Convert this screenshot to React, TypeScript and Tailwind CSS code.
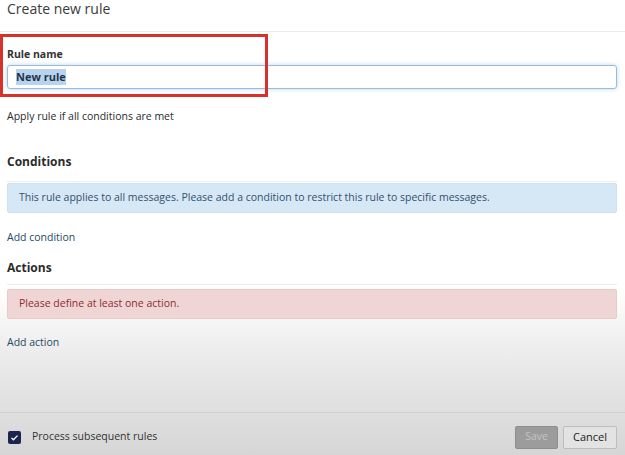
import { useState } from 'react';

const font = { fontFamily: '"Open Sans", "Noto Sans", sans-serif' };

function Section({ title, gap }: { title: string; gap: string }) {
  return (
    <div className={`border-b border-[#ececec] text-[12px] font-bold leading-[16px] text-[#2b2b2b] ${gap}`}>{title}</div>
  );
}

export default function App() {
  const [name, setName] = useState('New rule');
  const [subsequent, setSubsequent] = useState(true);

  return (
    <div
      className="relative flex h-[455px] w-[625px] flex-col bg-[linear-gradient(to_bottom,#ffffff_0%,#ffffff_64%,#eeeeee_76%,#e0e0e0_89%,#d6d6d6_100%)] text-[#2b2b2b]"
      style={font}
    >
      <div className="border-b border-[#ececec] px-[7px] pb-[13px] text-[14px] leading-[18px] text-[#3a3a3a]">
        Create new rule
      </div>

      <div className="flex flex-1 flex-col px-[7px] pr-[8px]">
        <label className="mt-[15px] text-[10.5px] font-bold leading-[15px] text-[#333]">Rule name</label>
        <div className="mt-[3px] flex h-[24px] items-center rounded-[3px] border border-[#9dbbd8] px-[8px] shadow-[0_0_4px_#b9d4ee]">
          <span className="bg-[#b9d3ee] text-[11px] font-bold text-[#1e3550]">{name}</span>
          <input className="hidden" value={name} onChange={(e) => setName(e.target.value)} />
        </div>

        <div className="mt-[20px] text-[10.5px] leading-[15px] text-[#2b2b2b]">Apply rule if all conditions are met</div>

        <div className="mt-[30px]">
          <Section title="Conditions" gap="pb-[11px]" />
        </div>
        <div className="mt-[1px] flex h-[30px] items-center rounded-[2px] border border-[#cfe1f0] bg-[#d6e8f5] px-[11px] text-[10.5px] text-[#34506e]">
          This rule applies to all messages. Please add a condition to restrict this rule to specific messages.
        </div>
        <button type="button" className="mt-[17px] self-start text-[10.5px] font-medium leading-[15px] text-[#234a5e]">
          Add condition
        </button>

        <div className="mt-[15px]">
          <Section title="Actions" gap="pb-[8px]" />
        </div>
        <div className="mt-[4px] flex h-[30px] items-center rounded-[2px] border border-[#ecc9c9] bg-[#f0d5d5] px-[11px] text-[10.5px] text-[#8e2b35]">
          Please define at least one action.
        </div>
        <button type="button" className="mt-[16px] self-start text-[10.5px] font-medium leading-[15px] text-[#234a5e]">
          Add action
        </button>
      </div>

      <div className="flex h-[43px] items-center border-t border-[#cfcfcf] px-[8px] pt-[6px]">
        <button
          type="button"
          onClick={() => setSubsequent((v) => !v)}
          className="flex h-[13px] w-[13px] items-center justify-center rounded-[2px] bg-[#1c2450]"
        >
          {subsequent && (
            <svg viewBox="0 0 12 12" className="h-[9px] w-[9px]">
              <path d="M2 6.5l2.5 2.5L10 3.5" fill="none" stroke="#fff" strokeWidth="1.8" />
            </svg>
          )}
        </button>
        <span className="ml-[11px] text-[10.5px] text-[#333]">Process subsequent rules</span>
        <div className="ml-auto flex gap-[5px]">
          <button type="button" className="h-[23px] w-[43px] rounded-[2px] border border-[#8e8e8e] bg-[#9c9c9c] text-[10.5px] text-[#c4c4c4]">
            Save
          </button>
          <button type="button" className="h-[23px] w-[54px] rounded-[2px] border border-[#bdbdbd] bg-[#e3e3e3] text-[11px] text-[#222]">
            Cancel
          </button>
        </div>
      </div>

      <div className="pointer-events-none absolute left-0 top-[34px] h-[63px] w-[268px] border-[3px] border-[#d8302b]" />
    </div>
  );
}
